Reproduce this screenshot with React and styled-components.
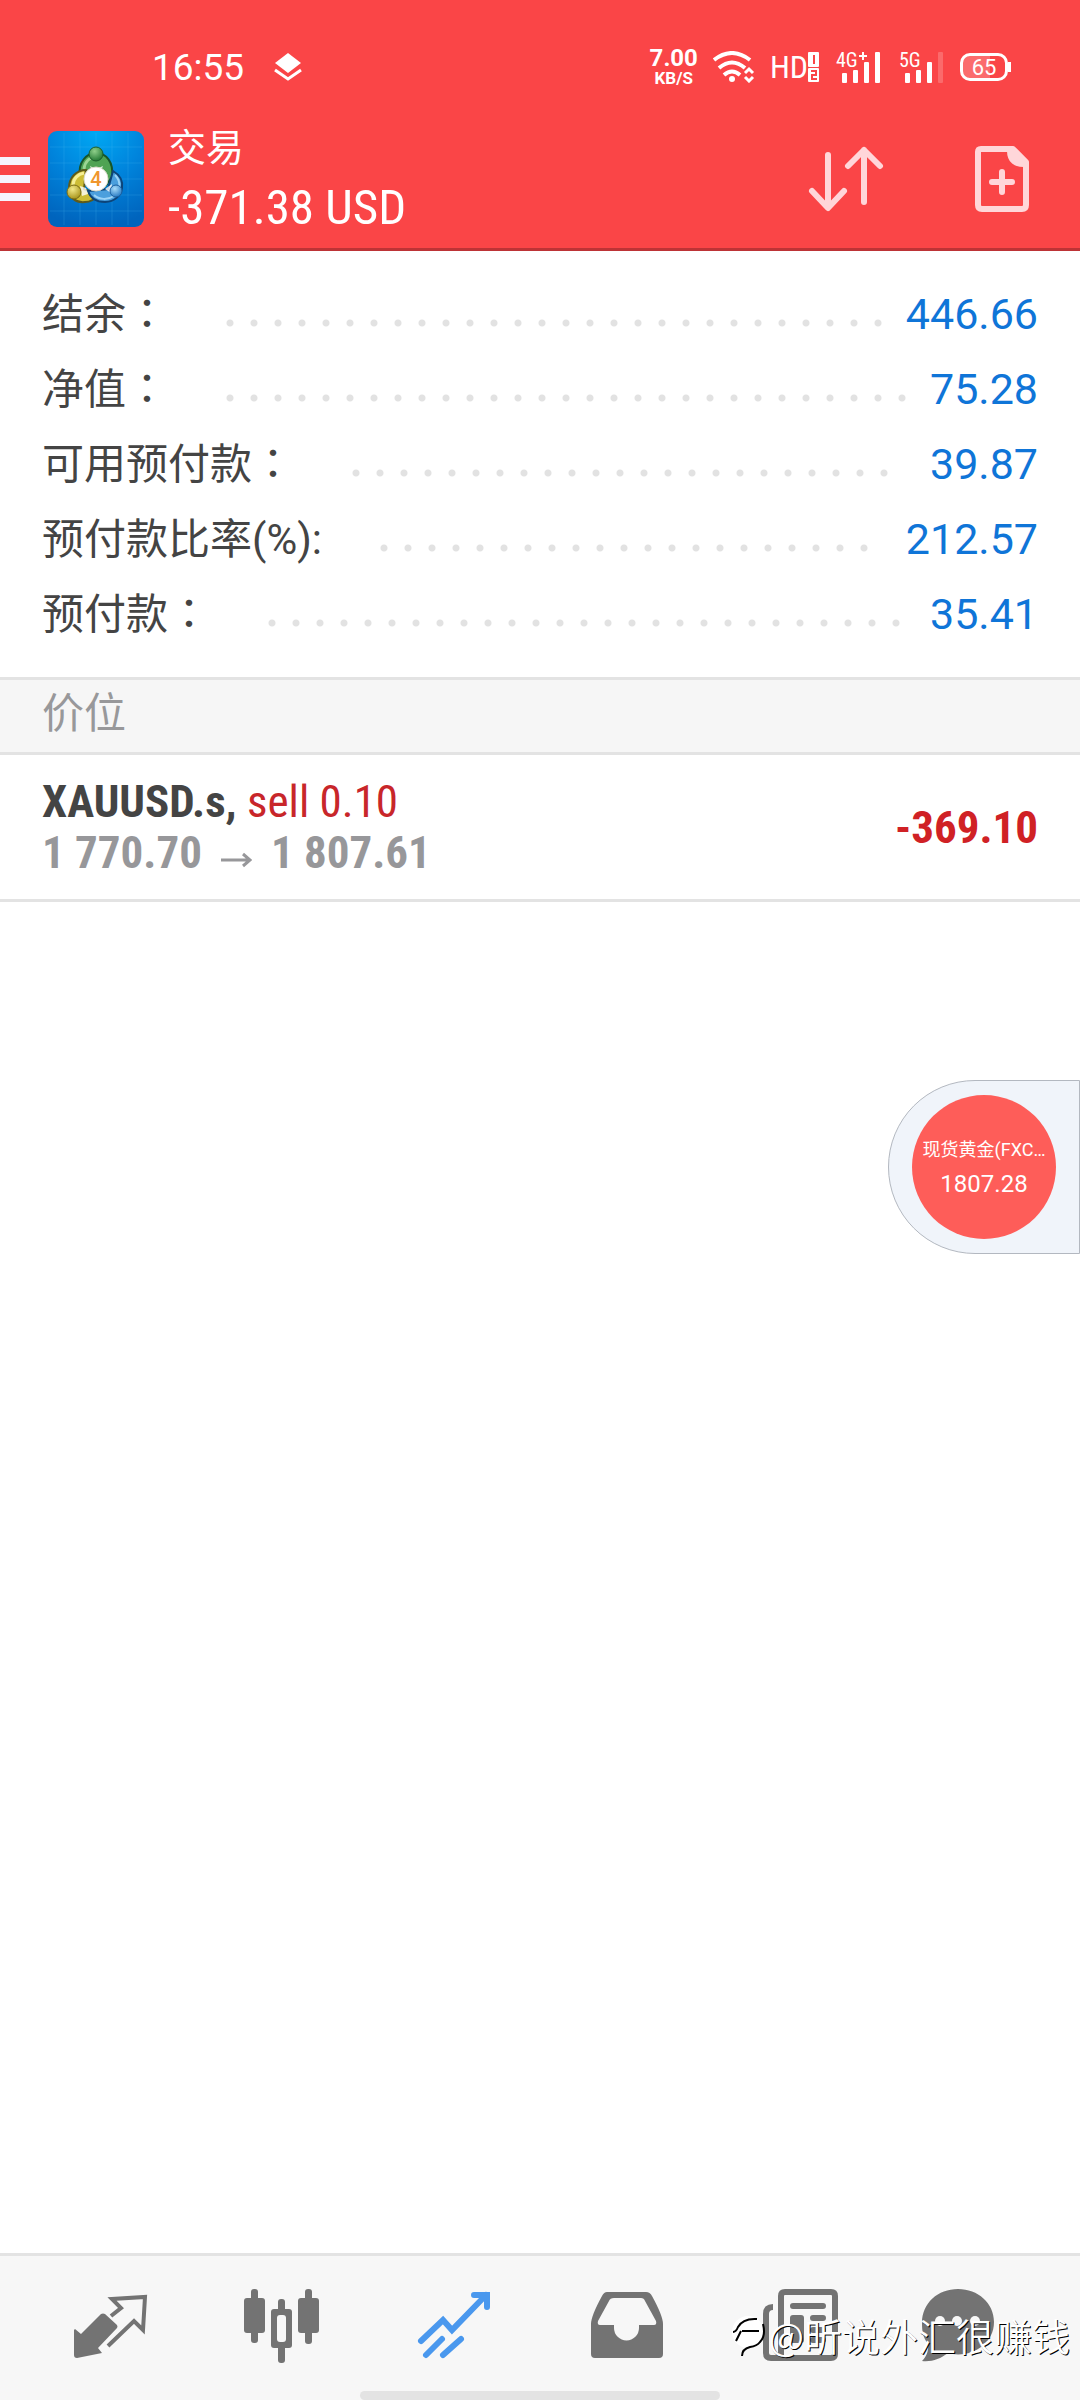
import React from 'react';
import styled, { createGlobalStyle } from 'styled-components';

const account = [
  { label: '结余', colon: '：', value: '446.66' },
  { label: '净值', colon: '：', value: '75.28' },
  { label: '可用预付款', colon: '：', value: '39.87' },
  { label: '预付款比率(%):', value: '212.57' },
  { label: '预付款', colon: '：', value: '35.41' },
];

const positions = [
  { symbol: 'XAUUSD.s', side: 'sell 0.10', open: '1 770.70', now: '1 807.61', profit: '-369.10' },
];

const AppLogo = () => (
  <Logo viewBox="0 0 96 96" aria-hidden="true">
    <defs>
      <radialGradient id="sky" cx="50%" cy="0%" r="100%">
        <stop offset="0" stopColor="#00a9f4" />
        <stop offset="0.5" stopColor="#0084dc" />
        <stop offset="1" stopColor="#0064bd" />
      </radialGradient>
      <radialGradient id="green" cx="40%" cy="30%" r="70%">
        <stop offset="0" stopColor="#8fcf8a" />
        <stop offset="1" stopColor="#257a35" />
      </radialGradient>
      <radialGradient id="yellow" cx="40%" cy="30%" r="70%">
        <stop offset="0" stopColor="#f2e98a" />
        <stop offset="1" stopColor="#a8951c" />
      </radialGradient>
      <radialGradient id="blue" cx="40%" cy="30%" r="70%">
        <stop offset="0" stopColor="#a8dcfa" />
        <stop offset="1" stopColor="#2a7cc4" />
      </radialGradient>
    </defs>
    <rect width="96" height="96" rx="9" fill="url(#sky)" />
    <path
      d="M16 2V94M32 2V94M48 2V94M64 2V94M80 2V94M2 16H94M2 32H94M2 48H94M2 64H94M2 80H94"
      stroke="#4fc0f5"
      strokeOpacity="0.2"
      fill="none"
    />
    {/* three people around the coin */}
    <path d="M32 44c-2-12 6-22 16-22s18 9 16 24l-6 8-4-12-12-1z" fill="#4fa353" stroke="#17552a" strokeWidth="2" />
    <path d="M36 38c1-8 6-12 12-12" fill="none" stroke="#9ad593" strokeWidth="3" />
    <path d="M38 39c-10 0-17 8-17 18s7 15 16 14c6 0 10-3 13-7l-14-6z" fill="#cdbd35" stroke="#5d5a1c" strokeWidth="2" />
    <path d="M25 54c0-6 5-11 11-12" fill="none" stroke="#f5ee94" strokeWidth="3" />
    <path d="M65 40c7 4 10 10 9 17s-7 14-17 14-15-5-17-11l20-2z" fill="#4b9fdd" stroke="#0d4479" strokeWidth="2" />
    <path d="M67 44c4 4 5 8 4 12M46 64c5 5 14 5 20 1" fill="none" stroke="#9bd3f7" strokeWidth="2" />
    <path d="M42 35l6 3 7-3-2 5H44zM32 55l6 2 2 6-6 2zM57 58l7-5-1 9z" fill="#fff" opacity="0.8" />
    <circle cx="48" cy="23" r="7" fill="url(#green)" stroke="#1c5e2b" />
    <circle cx="26" cy="61" r="7" fill="url(#yellow)" stroke="#7a6d16" />
    <circle cx="68" cy="60" r="6" fill="url(#blue)" stroke="#1c5f9f" />
    <circle cx="48" cy="48" r="12" fill="#fff" stroke="#d8d8c8" />
    <text x="48" y="55" textAnchor="middle" fontFamily="Roboto, sans-serif" fontSize="20" fontWeight="500" fill="#f0962c">4</text>
  </Logo>
);

const Signal = ({ label, plus, weak }) => (
  <svg width="48" height="40" viewBox="-2 -4 48 40" fill="#fff">
    <text x="0" y="16" fontFamily="'Roboto Condensed', Roboto, sans-serif" fontSize="20">{label}</text>
    {plus && <path d="M23 5h8M27 1v8" stroke="#fff" strokeWidth="2" />}
    <rect x="6" y="22" width="5" height="10" rx="1" />
    <rect x="17" y="19" width="5" height="13" rx="1" />
    <rect x="28" y="11" width="5" height="21" rx="1" />
    <rect x="39" y="1" width="5" height="31" rx="1" opacity={weak ? 0.2 : 1} />
  </svg>
);

const tabs = [
  {
    name: '行情',
    icon: (
      <>
        <path d="M8 43l6 5 20-20q2-1 4 0l12 11q1 2 0 3L31 62l4 5-25 5q-3 0-3-3V44z" fill="currentColor" />
        <path d="M44 30l10-8-9-9 33-2-2 33-9-9-26 25" fill="none" stroke="currentColor" strokeWidth="4" />
      </>
    ),
  },
  {
    name: '图表',
    icon: (
      <g fill="currentColor">
        <rect x="5" y="12" width="21" height="35" rx="3" />
        <rect x="12" y="3" width="7" height="54" rx="3" />
        <rect x="39" y="13" width="7" height="64" rx="3" />
        <rect x="32" y="23" width="21" height="39" rx="3" />
        <rect x="38" y="29" width="9" height="27" rx="3" fill="#f7f7f7" />
        <rect x="59" y="12" width="21" height="35" rx="3" />
        <rect x="66" y="3" width="7" height="55" rx="3" />
      </g>
    ),
  },
  {
    name: '交易',
    active: true,
    icon: (
      <g fill="none" stroke="currentColor" strokeWidth="6" strokeLinecap="round">
        <path d="M10 55l22-21 9 10L75 9" />
        <path d="M63 9h13v12" />
        <path d="M15 69l16-16M32 69l18-16" />
      </g>
    ),
  },
  {
    name: '历史',
    icon: (
      <path
        d="M24 6h39q4 0 6 4 11 20 11 28v30q0 4-4 4H12q-4 0-4-4V38q0-8 11-28 2-4 5-4zM31 12q-4 0-5 3L15 35q-1 4 2 4h14v3a12 12 0 0 0 25 0v-3h15q3 0 2-4L62 15q-1-3-4-3z"
        fill="currentColor"
        fillRule="evenodd"
      />
    ),
  },
  {
    name: '新闻',
    icon: (
      <g fill="none" stroke="currentColor" strokeWidth="6">
        <path d="M18 21q-7 0-7 7v39q0 5 5 5h60q4 0 4-4V10q0-4-4-4H30q-4 0-4 4v62" />
        <path d="M38 20h30M58 32h10M58 44h10M58 54h10" strokeLinecap="round" />
        <rect x="35" y="29" width="14" height="28" rx="3" fill="currentColor" stroke="none" />
      </g>
    ),
  },
  {
    name: '聊天',
    icon: (
      <g fill="currentColor">
        <path d="M31 3C51 3 67 17 67 36 67 60 41 73 21 67 13 73 5 76-5 75-1 71 2 65 1 58-4 51-5 46-5 37-5 17 11 3 31 3z" />
        <circle cx="13" cy="35" r="5" fill="#f7f7f7" />
        <circle cx="30" cy="35" r="5" fill="#f7f7f7" />
        <circle cx="48" cy="35" r="5" fill="#f7f7f7" />
      </g>
    ),
  },
];

const App = () => (
  <>
    <GlobalStyle />
    <Screen>
      <Header>
        <StatusBar>
          <Clock>16:55</Clock>
          <svg width="28" height="28" viewBox="0 0 28 28">
            <path d="M14 0l13 10-13 10L1 10z" fill="#fff" />
            <path d="M1 17l13 9 13-9" fill="none" stroke="#fff" strokeWidth="3" />
          </svg>
          <Indicators>
            <Speed>
              <SpeedValue>7.00</SpeedValue>
              <SpeedUnit>KB/S</SpeedUnit>
            </Speed>
            <svg width="42" height="32" viewBox="0 0 42 32" fill="none" stroke="#fff" strokeWidth="4">
              <path d="M1 9q18-14 36 0M6 17q13-11 26 0M11 24q8-7 16 0" />
              <circle cx="19" cy="28" r="3" fill="#fff" stroke="none" />
              <path d="M32 22l4-4 4 4M32 26l4 4 4-4" strokeWidth="3" />
            </svg>
            <HdBadge>
              HD
              <svg width="11" height="32" viewBox="0 0 11 32">
                <rect y="1" width="11" height="15" rx="1" fill="#fff" />
                <rect y="17" width="11" height="14" rx="1" fill="#fff" />
                <path d="M6 4v9M3 20h5v4H4v4h5" fill="none" stroke="#fa4547" strokeWidth="2" />
              </svg>
            </HdBadge>
            <Signal label="4G" plus />
            <Signal label="5G" weak />
            <Battery>65</Battery>
          </Indicators>
        </StatusBar>
        <TitleBar>
          <MenuButton aria-label="菜单">
            <MenuLine />
            <MenuLine />
            <MenuLine />
          </MenuButton>
          <AppLogo />
          <Titles>
            <Title>交易</Title>
            <Total>-371.38 USD</Total>
          </Titles>
          <Actions>
            <IconButton aria-label="排序">
              <svg width="76" height="68" viewBox="0 0 76 68" fill="none" stroke="#ffd6d9" strokeWidth="6" strokeLinecap="round" strokeLinejoin="round">
                <path d="M20 10v52M4 46l16 17 16-17" />
                <path d="M56 57V5M40 21L56 5l16 16" />
              </svg>
            </IconButton>
            <IconButton aria-label="新订单">
              <svg width="56" height="68" viewBox="0 0 56 68" fill="none" stroke="#ffd6d9" strokeWidth="6" strokeLinejoin="round">
                <path d="M7 4h32l13 13v43q0 4-4 4H8q-4 0-4-4V7q0-3 3-3z" />
                <path d="M36 6q0 14 16 13L39 5z" fill="#ffd6d9" />
                <path d="M28 27v20M18 37h20" strokeLinecap="round" />
              </svg>
            </IconButton>
          </Actions>
        </TitleBar>
      </Header>

      <Main>
        <Summary>
          {account.map((item) => (
            <SummaryRow key={item.label}>
              <Label>
                {item.label}
                {item.colon && <WideColon>{item.colon}</WideColon>}
              </Label>
              <Leader>
                <Dots />
              </Leader>
              <Value>{item.value}</Value>
            </SummaryRow>
          ))}
        </Summary>
        <SectionTitle>价位</SectionTitle>
        {positions.map((item) => (
          <Position key={item.symbol}>
            <div>
              <Line>
                <b>{item.symbol},</b> <Side>{item.side}</Side>
              </Line>
              <Prices>
                {item.open}
                <svg width="31" height="30" viewBox="0 0 31 30" fill="none" stroke="#97979a" strokeWidth="3">
                  <path d="M0 22h29M22 16l7 6-7 6" />
                </svg>
                {item.now}
              </Prices>
            </div>
            <Profit>{item.profit}</Profit>
          </Position>
        ))}
      </Main>

      <TabBar>
        {tabs.map((tab) => (
          <Tab key={tab.name} $active={tab.active} aria-label={tab.name}>
            <svg width="96" height="80" viewBox="-5 0 96 80">{tab.icon}</svg>
          </Tab>
        ))}
        <HomeBar />
      </TabBar>

      <Quote>
        <QuoteCircle>
          <QuoteName>现货黄金(FXC…</QuoteName>
          <QuotePrice>1807.28</QuotePrice>
        </QuoteCircle>
      </Quote>

      <Watermark>
        <svg width="38" height="50" viewBox="0 0 38 50" fill="none" stroke="#000" strokeWidth="2">
          <circle cx="18" cy="22" r="16" fill="#fff" stroke="none" />
          <path d="M3 22q3 0 5-5 5-9 19-8M12 21h17M6 31l5-10" />
          <path d="M33 14q3 12-3 18-3 4-10 5-8 2-8 9" />
        </svg>
        @昕说外汇很赚钱
      </Watermark>
    </Screen>
  </>
);
export default App;

const GlobalStyle = createGlobalStyle`
  * {
    box-sizing: border-box;
  }
  body {
    margin: 0;
    background: #fff;
    font-family: Roboto, 'Noto Sans CJK SC', sans-serif;
  }
  button {
    padding: 0;
    border: 0;
    background: none;
    font: inherit;
  }
  svg {
    display: block;
    flex-shrink: 0;
  }
`;

const Screen = styled.div`
  position: relative;
  display: flex;
  flex-direction: column;
  min-height: 100vh;
  overflow: hidden;
`;

const Header = styled.header`
  background: #fa4547;
  border-bottom: 3px solid #bd3336;
  color: #fff;
`;
const StatusBar = styled.div`
  display: flex;
  align-items: center;
  height: 110px;
  padding: 24px 69px 0 152px;
`;
const Clock = styled.span`
  margin-right: 30px;
  font-size: 37px;
`;
const Indicators = styled.div`
  display: flex;
  align-items: center;
  gap: 15px;
  margin-left: auto;
`;
const Speed = styled.div`
  text-align: center;
  font-weight: 700;
`;
const SpeedValue = styled.div`
  font-size: 24px;
  line-height: 22px;
`;
const SpeedUnit = styled.div`
  font-size: 17px;
  line-height: 18px;
`;
const HdBadge = styled.div`
  display: flex;
  align-items: center;
  font-family: 'Roboto Condensed', Roboto, sans-serif;
  font-size: 32px;
  line-height: 40px;
`;
const Battery = styled.div`
  position: relative;
  width: 48px;
  height: 28px;
  margin-right: 3px;
  border: 3px solid #fff;
  border-radius: 10px;
  background: linear-gradient(90deg, #fb6c6d 65%, transparent 65%);
  font-size: 22px;
  line-height: 23px;
  text-align: center;

  &::after {
    content: '';
    position: absolute;
    top: 6px;
    right: -6px;
    width: 3px;
    height: 10px;
    background: #fff;
  }
`;

const TitleBar = styled.div`
  display: flex;
  align-items: center;
  height: 138px;
  padding-right: 50px;
`;
const MenuButton = styled.button`
  display: flex;
  flex-direction: column;
  gap: 10px;
  width: 30px;
  margin-right: 18px;
`;
const MenuLine = styled.span`
  width: 100%;
  height: 8px;
  background: #f6f4fd;
`;
const Logo = styled.svg`
  width: 96px;
  height: 96px;
`;
const Titles = styled.div`
  padding: 0 0 2px 24px;
  line-height: 60px;
`;
const Title = styled.div`
  font-size: 38px;
`;
const Total = styled.div`
  font-family: 'Roboto Condensed', Roboto, sans-serif;
  font-size: 49px;
`;
const Actions = styled.div`
  display: flex;
  gap: 90px;
  margin-left: auto;
`;
const IconButton = styled.button`
  display: flex;
`;

const Main = styled.main`
  flex: 1;
`;
const Summary = styled.div`
  padding: 26px 42px 25px;
`;
const SummaryRow = styled.div`
  display: flex;
  align-items: center;
  height: 75px;
  line-height: 75px;
`;
const Label = styled.span`
  color: #444;
  font-size: 42px;
`;
const WideColon = styled.span`
  font-family: Roboto, 'Noto Sans CJK TC', sans-serif;
`;
const Leader = styled.span`
  flex: 1;
  margin: 16px 4px 0 58px;
`;
// only whole dots, the rest of the leader stays empty
const Dots = styled.span`
  display: block;
  width: round(down, 100%, 24px);
  height: 8px;
  background: radial-gradient(circle at 4px 4px, #e2e2e2 3px, transparent 4px) 0 0 / 24px 8px;
`;
const Value = styled.span`
  color: #0f75d8;
  font-size: 43px;
`;

const SectionTitle = styled.h2`
  margin: 0;
  padding: 0 42px 4px;
  border: solid #e3e3e3;
  border-width: 3px 0;
  background: #f6f6f6;
  color: #98989a;
  font-size: 42px;
  font-weight: 400;
  line-height: 68px;
`;
const Position = styled.div`
  display: flex;
  align-items: center;
  justify-content: space-between;
  padding: 21px 42px;
  border-bottom: 3px solid #e3e3e3;
  font-family: 'Roboto Condensed', Roboto, sans-serif;
  font-size: 45px;
  line-height: 51px;
`;
const Line = styled.div`
  color: #444;
`;
const Side = styled.span`
  color: #c8262a;
`;
const Prices = styled.div`
  display: flex;
  align-items: center;
  gap: 19px;
  color: #97979a;
  font-weight: 700;
`;
const Profit = styled.span`
  color: #d02125;
  font-weight: 700;
`;

const TabBar = styled.nav`
  position: relative;
  display: flex;
  padding: 30px 24px 34px;
  border-top: 3px solid #e3e3e3;
  background: #f7f7f7;
`;
const Tab = styled.button`
  display: flex;
  flex: 1;
  justify-content: center;
  color: ${({ $active }) => ($active ? '#4a98ee' : '#737373')};
`;
const HomeBar = styled.span`
  position: absolute;
  bottom: 0;
  left: 50%;
  width: 360px;
  height: 9px;
  margin-left: -180px;
  border-radius: 5px;
  background: #e3e3e3;
`;

const Quote = styled.div`
  position: absolute;
  top: 1080px;
  right: 0;
  padding: 14px 23px;
  border: 1px solid #b3b8c0;
  border-radius: 87px 0 0 87px;
  background: #f0f4fa;
`;
const QuoteCircle = styled.div`
  display: flex;
  flex-direction: column;
  align-items: center;
  justify-content: center;
  width: 144px;
  height: 144px;
  border-radius: 50%;
  background: #fe5d59;
  color: #fff;
`;
const QuoteName = styled.div`
  font-size: 18px;
  line-height: 34px;
  white-space: nowrap;
`;
const QuotePrice = styled.div`
  font-size: 24px;
  line-height: 34px;
`;

const Watermark = styled.div`
  position: absolute;
  right: 10px;
  bottom: 40px;
  display: flex;
  align-items: center;
  color: #fff;
  font-family: 'Noto Sans CJK SC', sans-serif;
  font-size: 38px;
  font-weight: 350;
  line-height: 50px;
  text-shadow: 1px 1px 0 #000;
`;
